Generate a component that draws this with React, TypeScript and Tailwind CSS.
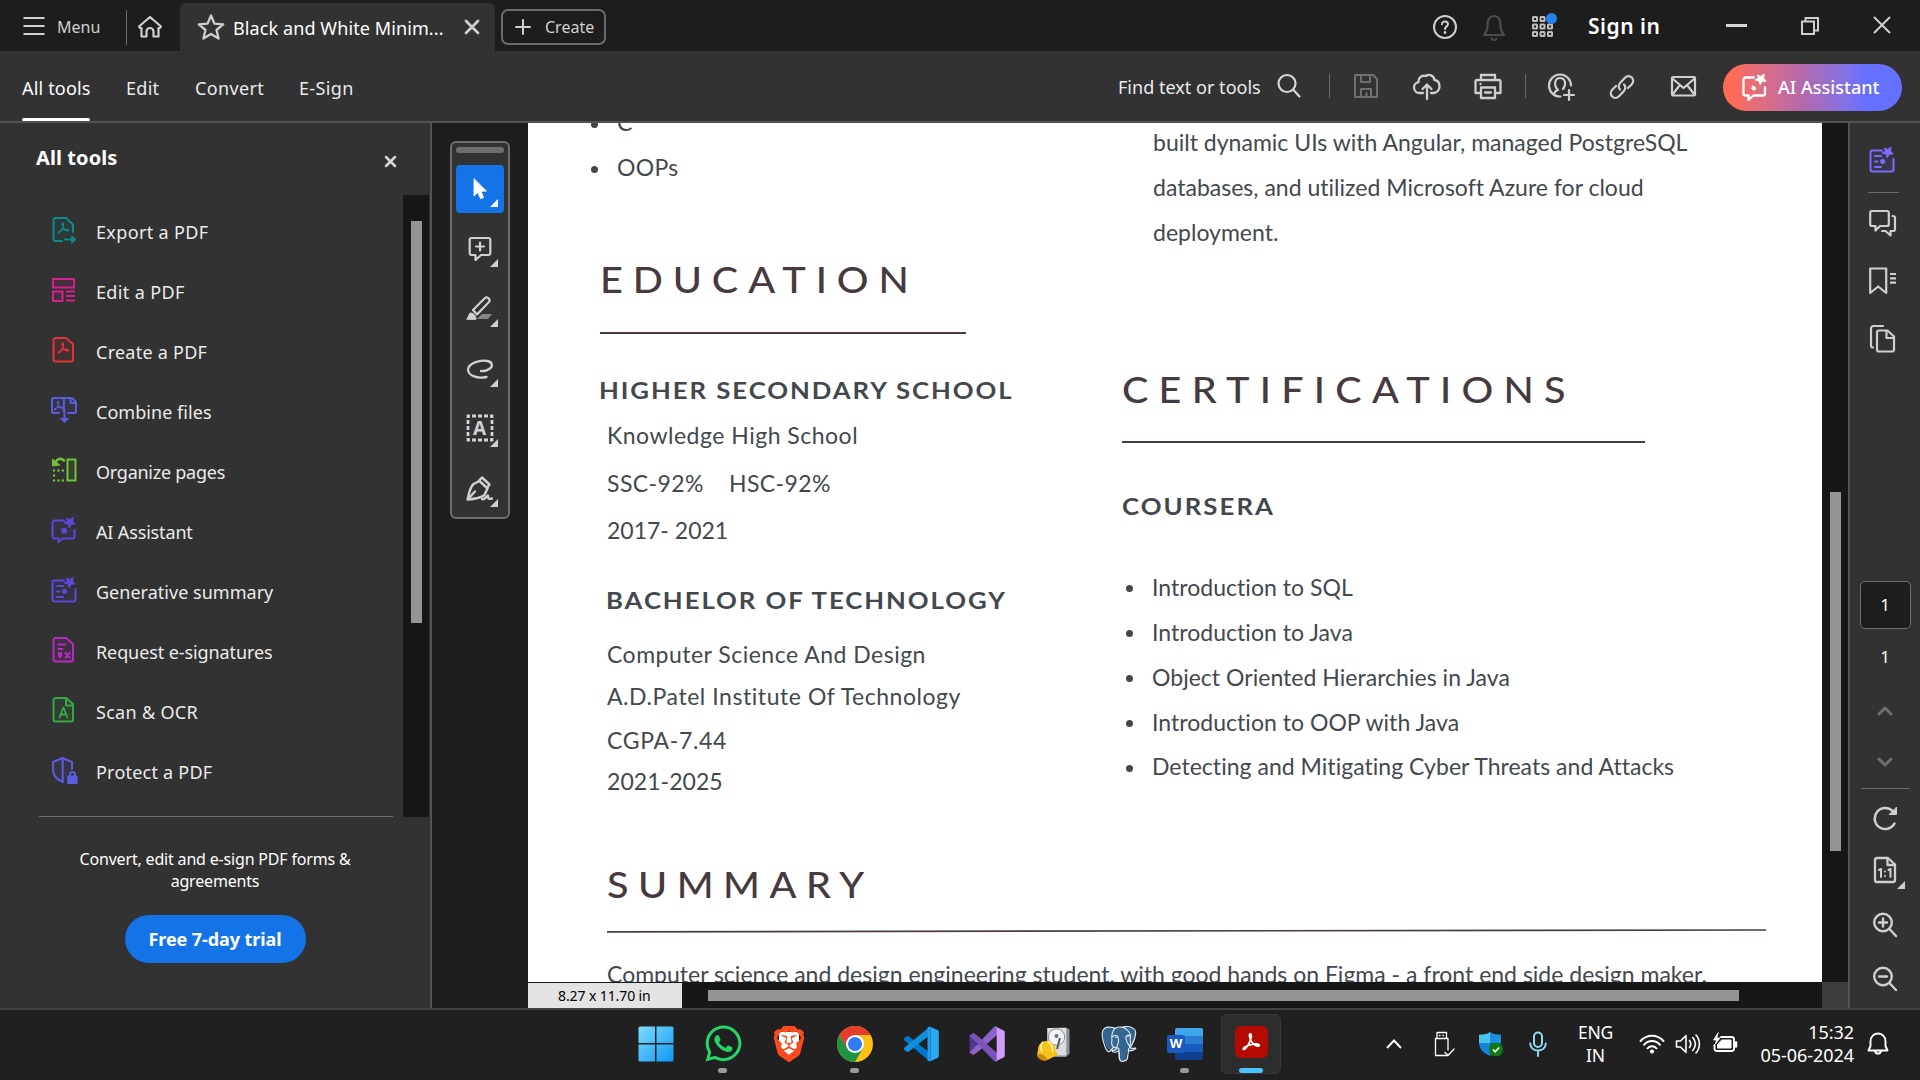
import React from "react";
import { FaWhatsapp } from "react-icons/fa";
import { SiBrave, SiPostgresql } from "react-icons/si";

type SvgProps = {
  w: number;
  h: number;
  vb?: string;
  className?: string;
  sw?: number;
  children: React.ReactNode;
};

function Svg({ w, h, vb, className = "", sw = 2, children }: SvgProps) {
  return (
    <svg
      width={w}
      height={h}
      viewBox={vb ?? `0 0 ${w} ${h}`}
      fill="none"
      stroke="currentColor"
      strokeWidth={sw}
      strokeLinecap="round"
      strokeLinejoin="round"
      className={`block shrink-0 ${className}`}
    >
      {children}
    </svg>
  );
}

const TREFOIL =
  "M11.5 5c-1.5 0-.8 4 .8 6.5 1.6 2.5 4.5 4.3 6 4 1.8-.4.6-2.2-3-1.9-3 .2-6.5 1.4-8.8 2.9-2 1.4-1 2.7.5 1.3 2-1.8 4.8-6.8 5.2-9.8.2-1.8 0-3-.7-3z";

const Sparkle = () => (
  <path
    d="M16.5 2.2l3.3 1.2 3.2-2.2.2 0-.7 3.9 2.6 3-3.9.1-2 3.5-1.2-3.8-3.8-.9 3.2-2.2z"
    fill="currentColor"
    strokeWidth={1}
  />
);

const Triangle = ({ className = "" }: { className?: string }) => (
  <svg width="8" height="8" viewBox="0 0 8 8" className={className}>
    <path d="M8 0v8H0z" fill="currentColor" />
  </svg>
);

/* ---------- sidebar tool icons ---------- */

const PdfPage = ({ arrow = false }: { arrow?: boolean }) => (
  <Svg w={28} h={28}>
    {arrow ? (
      <>
        <path d="M12 25H5.500a2 2 0 0 1-2-2V4a2 2 0 0 1 2-2H16l7 6.500V16" fill="currentColor" fillOpacity={0.1} />
        <path d="M15 23.500h9" />
        <path d="M22 20l4 3.500-4 3.500z" fill="currentColor" strokeWidth={1} />
      </>
    ) : (
      <path d="M5.500 2H16l7 6v15.500a2 2 0 0 1-2 2H5.500a2 2 0 0 1-2-2V4a2 2 0 0 1 2-2z" fill="currentColor" fillOpacity={0.1} />
    )}
    <path d={TREFOIL} transform="translate(4.200 3.200) scale(.75)" strokeWidth={1.7} />
  </Svg>
);

const EditIcon = () => (
  <Svg w={28} h={28}>
    <rect x="3" y="3" width="21" height="8.500" fill="currentColor" fillOpacity={0.1} strokeLinejoin="miter" />
    <rect x="3" y="15.500" width="9.500" height="9.500" fill="currentColor" fillOpacity={0.1} />
    <path d="M16 15.500h9M16 20h9M16 24.500h9" strokeLinecap="butt" />
  </Svg>
);

const CombineIcon = () => (
  <Svg w={28} h={28}>
    <path d="M9 17H3.500A1.500 1.500 0 0 1 2 15.500v-12A1.500 1.500 0 0 1 3.500 2H14v14M18 17h6.500a1.500 1.500 0 0 0 1.500-1.500V6l-4-4h-8" fill="currentColor" fillOpacity={0.1} />
    <path d="M20.500 2v5H26" />
    <path d="M14.500 14v8" />
    <path d="M11 22.500h7.500L14.700 26.500z" fill="currentColor" strokeWidth={1} />
    <path d={TREFOIL} transform="translate(1 2.500) scale(.62)" strokeWidth={1.700} />
  </Svg>
);

const OrganizeIcon = () => (
  <Svg w={28} h={28}>
    <rect x="17.500" y="3.500" width="8" height="21" strokeLinejoin="miter" fill="currentColor" fillOpacity={0.1} />
    <path d="M14 4.500C11 1.500 7 3 5 6.500" strokeWidth={2.500} />
    <path d="M2.500 3.500v6.500l7-1z" fill="currentColor" strokeWidth={1} />
    <path d="M4 14.500h10.500M4 24.500h10.500M4 19.500v.1" strokeWidth={2.400} strokeDasharray="0.100 4.300" />
  </Svg>
);

const AiIcon = () => (
  <Svg w={28} h={28}>
    <path d="M14 4.500H5A2.500 2.500 0 0 0 2.500 7v13A2.500 2.500 0 0 0 5 22.500h3.500V26l4.500-3.500h9a2.500 2.500 0 0 0 2.500-2.500v-6" fill="currentColor" fillOpacity={0.1} />
    <path d="M12 13.500l3.500-.5.700 3-3.200.7z" fill="currentColor" />
    <Sparkle />
  </Svg>
);

const SummaryIcon = () => (
  <Svg w={28} h={28}>
    <path d="M14 4.500H4.500a2 2 0 0 0-2 2V23.500a2 2 0 0 0 2 2h19a2 2 0 0 0 2-2V13" fill="currentColor" fillOpacity={0.1} />
    <path d="M7 10h6M7 15.500h2.500M7 21h6" />
    <path d="M13 14.500l2.500-.8.800 2.500-2.600.8z" fill="currentColor" />
    <Sparkle />
  </Svg>
);

const SignIcon = () => (
  <Svg w={28} h={28}>
    <path d="M5.500 2H16l7 6v15.500a2 2 0 0 1-2 2H5.500a2 2 0 0 1-2-2V4a2 2 0 0 1 2-2z" fill="currentColor" fillOpacity={0.1} />
    <path d="M8.500 8.500h6.500M8.500 13h4" />
    <path d="M8.500 16.500h3v3.500l-1.500 2-1.500-2z" fill="currentColor" strokeWidth={1.200} />
    <path d="M15.500 17l4 4.500M19.500 17l-4 4.500" />
  </Svg>
);

const ScanIcon = () => (
  <Svg w={28} h={28}>
    <path d="M5.500 2H16l7 6v15.500a2 2 0 0 1-2 2H5.500a2 2 0 0 1-2-2V4a2 2 0 0 1 2-2z" fill="currentColor" fillOpacity={0.1} />
    <path d="M16 2v7.500h7" />
    <path d="M9.500 21.500L13 12l.800 0 3.500 9.500M10.700 18.500h5.300" strokeWidth={1.800} />
  </Svg>
);

const ProtectIcon = () => (
  <Svg w={28} h={28}>
    <path d="M13 26C6.500 23.500 3 19.500 3 13.500V6l9.500-4L22 6v7" fill="currentColor" fillOpacity={0.1} />
    <path d="M12.700 2v24" />
    <rect x="18" y="20" width="9" height="7.500" fill="currentColor" strokeWidth={1} />
    <path d="M20 20v-1.500a2.500 2.500 0 0 1 5 0V20" />
  </Svg>
);

const TOOLS = [
  { label: "Export a PDF", icon: <PdfPage arrow />, color: "text-[#0d8c8c]", track: "tracking-[0.36px]" },
  { label: "Edit a PDF", icon: <EditIcon />, color: "text-[#d5218d]", track: "tracking-[0.36px]" },
  { label: "Create a PDF", icon: <PdfPage />, color: "text-[#e2323b]", track: "tracking-[0.25px]" },
  { label: "Combine files", icon: <CombineIcon />, color: "text-[#5c5ce0]", track: "tracking-[0.04px]" },
  { label: "Organize pages", icon: <OrganizeIcon />, color: "text-[#72c13a]", track: "tracking-[-0.25px]" },
  { label: "AI Assistant", icon: <AiIcon />, color: "text-[#5b49dc]", track: "tracking-[-0.15px]" },
  { label: "Generative summary", icon: <SummaryIcon />, color: "text-[#5b49dc]", track: "tracking-[0.02px]" },
  { label: "Request e-signatures", icon: <SignIcon />, color: "text-[#b52bc2]", track: "tracking-[-0.1px]" },
  { label: "Scan & OCR", icon: <ScanIcon />, color: "text-[#36a846]", track: "tracking-[0.3px]" },
  { label: "Protect a PDF", icon: <ProtectIcon />, color: "text-[#5c5ce0]", track: "tracking-[0.22px]" },
];

/* ---------- window header ---------- */

function TitleBar() {
  return (
    <div className="flex h-[51px] items-center bg-[#1d1d1d] text-[#cfcfcf]">
      <Svg w={22} h={20} className="ml-[23px]">
        <path d="M1.200 2h19.600M1.200 10h19.600M1.200 18h19.600" />
      </Svg>
      <span className="ml-3 w-[69px] pt-[2px] text-[16px]">Menu</span>
      <div className="mt-1 h-[35px] w-px bg-[#6a6a6a]" />
      <Svg w={26} h={24} className="ml-[10px] mt-[2px]" sw={2.200}>
        <path d="M2 11.500L13 2l11 9.500-1 1.500h-1.500v8.500h-5V16.500a3.500 3.500 0 0 0-7 0v5h-5V13H3z" />
      </Svg>
      <div className="ml-[17px] flex h-[48px] w-[315px] items-center self-end rounded-t-md bg-[#323232]">
        <Svg w={28} h={28} className="ml-[17px]" sw={2.300}>
          <path d="M14 2.500l3.400 8.100 8.800.7-6.700 5.700 2.100 8.500L14 20.900l-7.600 4.600 2.100-8.500-6.700-5.700 8.800-.7z" />
        </Svg>
        <span className="ml-[8px] w-[229px] pt-[2px] text-[18px] tracking-[0.1px] text-white">Black and White Minim...</span>
        <Svg w={16} h={16} className="ml-[2px]" sw={2.800}>
          <path d="M2 2l12 12M14 2L2 14" />
        </Svg>
      </div>
      <div className="ml-[6px] mt-[3px] flex h-[36px] w-[105px] items-center rounded-[7px] border-2 border-[#6a6a6a]">
        <Svg w={16} h={16} className="ml-[12px]">
          <path d="M8 1v14M1 8h14" />
        </Svg>
        <span className="ml-[14px] text-[16px]">Create</span>
      </div>

      <div className="ml-auto flex h-full items-center">
        <Svg w={26} h={26} className="mt-[2px]" sw={2}>
          <circle cx="13" cy="13" r="11" />
          <path d="M10 10.300c0-4 6-3.700 6-.2 0 2.200-3 2.400-3 4.900" />
          <path d="M13 18.300v.4" strokeWidth={2.600} />
        </Svg>
        <Svg w={24} h={28} className="ml-[24px] mt-[5px] text-[#4b4b4b]" sw={2.200}>
          <path d="M2 21c3-3 3.500-6 3.500-10C5.500 5 8 2 12 2s6.500 3 6.500 9c0 4 .5 7 3.500 10z" />
          <path d="M9.500 24.500c1 2 4 2 5 0" />
        </Svg>
        <div className="relative ml-[25px] mt-[3px]">
          <Svg w={24} h={24} sw={2} className="text-[#bdbdbd]">
            {[2, 9.500, 17].map((y) =>
              [2, 9.500, 17].map((x) => <rect key={`${x}-${y}`} x={x} y={y} width="4" height="4" rx=".5" />),
            )}
          </Svg>
          <span className="absolute -top-[2px] left-[15px] size-[11px] rounded-full bg-[#2680eb]" />
        </div>
        <span className="ml-[33px] w-[101px] pt-[3px] text-[21px] font-semibold tracking-[0.5px] text-white">Sign in</span>
        <div className="ml-[37px] h-[3px] w-[21px] bg-[#d6d6d6]" />
        <Svg w={20} h={20} className="ml-[53px]" sw={2}>
          <path d="M2 5.500h12v12.500H2zM5.500 5V2H18v12.500h-3.500" strokeLinejoin="miter" />
        </Svg>
        <Svg w={18} h={18} className="ml-[53px] mr-[29px] mb-[2px]" sw={2}>
          <path d="M1.500 1.500l15 15M16.500 1.500l-15 15" />
        </Svg>
      </div>
    </div>
  );
}

function Toolbar() {
  return (
    <div className="flex h-[72px] items-center border-b-2 border-[#535353] bg-[#323232] pl-[22px] text-[18px] text-[#ebebeb]">
      <div className="flex h-full w-[68px] flex-col justify-end text-white">
        <span className="mb-[18px] whitespace-nowrap leading-[24px] tracking-[0.18px]">All tools</span>
        <span className="h-[3px] rounded-full bg-white" />
      </div>
      <span className="ml-[36px] w-[69px] pt-[5px] tracking-[0.29px]">Edit</span>
      <span className="w-[104px] pt-[5px] tracking-[0.36px]">Convert</span>
      <span className="pt-[5px] tracking-[0.36px]">E-Sign</span>

      <div className="ml-auto flex h-full items-center text-[#cfcfcf]">
        <span className="w-[158px] pt-[3px] tracking-[0.02px] whitespace-nowrap text-[#ebebeb]">Find text or tools</span>
        <Svg w={26} h={26} className="text-[#d8d8d8]" sw={2.200}>
          <circle cx="11" cy="10.500" r="8.500" />
          <path d="M17.500 17l6 6.500" />
        </Svg>
        <div className="ml-[27px] h-[24px] w-px bg-[#6a6a6a]" />
        <Svg w={26} h={26} className="ml-[23px] text-[#707070]">
          <path d="M2 2h18l4 4v18H2z" />
          <path d="M8 2v7h9V2M8 24v-8h10v8M13.500 20v4" />
        </Svg>
        <Svg w={30} h={28} className="ml-[33px] mt-[2px]" sw={2.300}>
          <path d="M11 20H7.500a5.500 5.500 0 0 1-1-10.900C6 4.500 10 2 14 3c3-2.500 8-.5 8.500 4 3.500.3 5 3 5 6.500S25 20 21.500 20H19" />
          <path d="M15 26V12M10.500 16L15 11.500l4.500 4.500" />
        </Svg>
        <Svg w={30} h={28} className="ml-[31px] mt-[1px]" sw={2.300}>
          <path d="M8 7V2h14v5M7 20H2.500V8.500A1.500 1.500 0 0 1 4 7h22a1.500 1.500 0 0 1 1.500 1.500V20H23" />
          <path d="M8 14.500h14V25H8z M12 19.500h6M7.500 11h.1" />
        </Svg>
        <div className="ml-[22px] h-[24px] w-px bg-[#6a6a6a]" />
        <Svg w={30} h={30} className="ml-[20px] mt-[2px]" sw={2.200}>
          <path d="M14.500 24.500A11 11 0 1 1 25 13.500" />
          <path d="M8 22.500c.5-3 2-4 4-4.500-5-5-3-12 2-12s7 6 3 11" />
          <path d="M23 18v10M18 23h10" />
        </Svg>
        <Svg w={26} h={26} className="ml-[33px] mt-[2px]" sw={2.300}>
          <path d="M11 15.500c-2-2-1.500-5 .5-7l4.500-4.800c2-2 5-2 6.800-.2 1.800 1.800 1.800 4.800 0 6.700L19 14" />
          <path d="M15 10.500c2 2 1.500 5-.5 7L10 22.300c-2 2-5 2-6.800.2-1.800-1.800-1.800-4.800 0-6.700L7 12" />
        </Svg>
        <Svg w={28} h={24} className="ml-[35px] mt-[1px]" sw={2.200}>
          <rect x="2" y="2" width="23" height="18.500" rx="1" />
          <path d="M3 4l10.500 9L24 4M3 19l6.500-8.500M24 19l-6.500-8.500" />
        </Svg>
        <div className="ml-[25px] mr-[18px] mt-[2px] flex h-[47px] w-[179px] items-center rounded-full bg-gradient-to-r from-[#ff6b55] from-5% via-[#b268ad] via-45% to-[#6670ff] to-80% text-white">
          <Svg w={28} h={28} className="ml-[18px]" sw={2.300}>
            <path d="M13 4.500H4.500a2 2 0 0 0-2 2v14a2 2 0 0 0 2 2h3V27l5-4.500h9.500a2 2 0 0 0 2-2v-6" />
            <path d="M12 13l3 2-1.500 2.500L11 16z" fill="currentColor" strokeWidth={1} />
            <Sparkle />
          </Svg>
          <span className="ml-[9px] whitespace-nowrap font-medium tracking-[0.03px]">AI Assistant</span>
        </div>
      </div>
    </div>
  );
}

function Sidebar() {
  return (
    <div className="flex w-[432px] shrink-0 flex-col border-r-2 border-[#535353] bg-[#323232]">
      <div className="flex h-[72px] items-center justify-between pb-[2px] pl-[36px] pr-[33px]">
        <span className="text-[20px] font-bold tracking-[0.09px] text-white">All tools</span>
        <Svg w={13} h={13} className="mt-[6px] text-[#d6d6d6]" sw={2.500}>
          <path d="M2 2l9 9M11 2l-9 9" />
        </Svg>
      </div>
      <div className="flex h-[622px]">
        <div className="mr-[10px] flex w-[393px] flex-col pl-[39px]">
          <div className="h-[623px] border-b border-[#6e6e6e] pt-[6px]">
            {TOOLS.map((t) => (
              <div key={t.label} className="flex h-[60px] items-center pl-[11px]">
                <span className={`mb-[2px] ${t.color}`}>{t.icon}</span>
                <span className={`ml-[18px] pt-[2px] text-[18px] whitespace-nowrap text-[#ebebeb] ${t.track}`}>{t.label}</span>
              </div>
            ))}
          </div>
        </div>
        <div className="w-[26px] bg-[#171717] pt-[26px]">
          <div className="ml-[8px] h-[402px] w-[11px] bg-[#959595]" />
        </div>
      </div>
      <div className="flex flex-col items-center pt-[31px] text-center text-white">
        <p className="text-[16px] leading-[22px] tracking-[-0.18px]">
          Convert, edit and e-sign PDF forms &
          <br />
          agreements
        </p>
        <button className="mt-[23px] h-[48px] w-[181px] rounded-full bg-[#1473e6] text-[18px] font-bold tracking-[-0.09px]">
          Free 7-day trial
        </button>
      </div>
    </div>
  );
}

const QUICK_TOOLS = [
  <Svg key="arrow" w={26} h={28} className="-mt-[2px] text-white">
    <path d="M7 5v17l3.800-3.500 2.800 6.300 3-1.300L14 17.300l5.200-.2z" fill="currentColor" strokeWidth={.8} />
  </Svg>,
  <Svg key="note" w={26} h={28} sw={2.200}>
    <path d="M4.500 3h17A1.800 1.800 0 0 1 23.300 4.800v13.400a1.800 1.800 0 0 1-1.800 1.800H14l-5.500 5V20h-4a1.800 1.800 0 0 1-1.800-1.800V4.800A1.800 1.800 0 0 1 4.500 3zM13 7.500v8M9 11.500h8" />
  </Svg>,
  <Svg key="highlight" w={28} h={28} sw={2.200} className="-mt-[3px] -ml-[2px]">
    <path d="M12 25l5-5h10l-4 5z" fill="#858585" stroke="none" />
    <path d="M8 16L20 4c2-2 6 1.500 4 4L12 20.500z" />
    <path d="M2 25l3-6c3 0 6 2 6 6z" fill="currentColor" strokeWidth={1} />
  </Svg>,
  <Svg key="lasso" w={28} h={28} sw={2.300}>
    <path d="M20.500 22C10 24 2.500 20 2 15 2 8 14 4.500 21.500 6c5 1 5.500 5 2.500 7.500-2.500 2-6 2.700-9 2.500" />
  </Svg>,
  <div key="text" className="-mt-[2px] -ml-px flex size-[28px] items-center justify-center">
    <svg width="28" height="28" viewBox="0 0 28 28" className="absolute" fill="none" stroke="currentColor" strokeWidth="2.800">
      <rect x="2" y="2" width="24" height="24" strokeDasharray="4 2" strokeDashoffset="2" />
    </svg>
    <span className="text-[19px] leading-none font-bold">A</span>
  </div>,
  <Svg key="pen" w={28} h={28} sw={2.400} className="-mt-px -ml-[2px]">
    <path d="M2.500 24.500C4 18 5 12 8.500 9l6-3 8 7.500-3 6.500c-3.500 3-10 4-17 4.500zl7.500-8" />
    <path d="M14 5.500l3-3 7.500 7-2.500 3.500M17 24c3 1.500 5-4 6-3.500s-2 4.500 4 3" />
  </Svg>,
];

function QuickTools() {
  return (
    <div className="w-[96px] shrink-0 bg-[#1d1d1d] pt-[18px] pl-[18px]">
      <div className="flex h-[378px] w-[60px] flex-col items-center rounded-md border-2 border-[#6e6e6e] bg-[#323232] pt-[4px]">
        <div className="mb-[12px] h-[6px] w-[48px] shrink-0 rounded-full bg-[#6e6e6e]" />
        <div className="flex flex-col gap-[12px]">
          {QUICK_TOOLS.map((icon, i) => (
            <div
              key={i}
              className={`relative flex size-[48px] items-center justify-center rounded-[4px] text-[#d0d0d0] ${i === 0 ? "bg-[#1473e6]" : ""}`}
            >
              {icon}
              <Triangle className={`absolute right-[6px] bottom-[6px] ${i === 0 ? "text-white" : ""}`} />
            </div>
          ))}
        </div>
      </div>
    </div>
  );
}

/* ---------- document ---------- */

const CERTS = [
  "Introduction to SQL",
  "Introduction to Java",
  "Object Oriented Hierarchies in Java",
  "Introduction to OOP with Java",
  "Detecting and Mitigating Cyber Threats and Attacks",
];

const Heading = ({ className, children }: { className: string; children: string }) => (
  <h2
    className={`h-[44px] origin-left scale-x-110 text-[36px] leading-[44px] font-medium whitespace-nowrap text-[#463a40] ${className}`}
  >
    {children}
  </h2>
);

const Sub = ({ className, children }: { className: string; children: string }) => (
  <h3
    className={`h-[30px] origin-left scale-x-[1.12] text-[23px] leading-[30px] font-bold whitespace-nowrap text-[#43484e] ${className}`}
  >
    {children}
  </h3>
);

const Line = ({ className, children }: { className: string; children: React.ReactNode }) => (
  <p className={`h-[30px] pl-[7px] leading-[30px] whitespace-nowrap ${className}`}>{children}</p>
);

function ResumePage() {
  return (
    <div className="h-[859px] overflow-hidden bg-white font-['Lato',sans-serif] text-[23px] text-[#43484e]">
      <div className="grid h-[739px] grid-cols-[594px_1fr]">
        <div className="pl-[72px]">
          <ul className="-mt-[23px] -ml-[9px]">
            {["C", "OOPs"].map((s) => (
              <li key={s} className="flex h-[45px] items-center gap-[19px] tracking-[0.300px]">
                <span className="mt-[3px] size-[7px] rounded-full bg-[#43484e]" />
                {s}
              </li>
            ))}
          </ul>
          <Heading className="mt-[67px] tracking-[9px]">EDUCATION</Heading>
          <div className="mt-[31px] h-[2px] w-[366px] bg-[#4a3c42]" />
          <Sub className="mt-[41px] -ml-px tracking-[1.730px]">HIGHER SECONDARY SCHOOL</Sub>
          <Line className="mt-[15px] tracking-[0.500px]">Knowledge High School</Line>
          <Line className="mt-[18px] flex tracking-[0.400px]">
            <span className="w-[122px]">SSC-92%</span>
            <span>HSC-92%</span>
          </Line>
          <Line className="mt-[17px] tracking-[0px]">2017- 2021</Line>
          <Sub className="mt-[40px] ml-[6px] tracking-[1.730px]">BACHELOR OF TECHNOLOGY</Sub>
          <Line className="mt-[24px] tracking-[0.490px]">Computer Science And Design</Line>
          <Line className="mt-[12px] tracking-[0.550px]">A.D.Patel Institute Of Technology</Line>
          <Line className="mt-[14px] tracking-[0.660px]">CGPA-7.44</Line>
          <Line className="mt-[11px] tracking-[0.050px]">2021-2025</Line>
        </div>
        <div>
          <p className="-mt-[3px] pl-[31px] leading-[45px] tracking-[0.010px] whitespace-nowrap">
            built dynamic UIs with Angular, managed PostgreSQL
            <br />
            databases, and utilized Microsoft Azure for cloud
            <br />
            deployment.
          </p>
          <Heading className="mt-[112px] tracking-[9.300px]">CERTIFICATIONS</Heading>
          <div className="mt-[30px] h-[2px] w-[523px] bg-[#4a3c42]" />
          <Sub className="mt-[48px] tracking-[1.830px]">COURSERA</Sub>
          <ul className="mt-[44px] ml-[4px]">
            {CERTS.map((s) => (
              <li key={s} className="flex h-[44.800px] items-center gap-[19px] tracking-[0.030px] whitespace-nowrap">
                <span className="mt-[3px] size-[7px] rounded-full bg-[#43484e]" />
                {s}
              </li>
            ))}
          </ul>
        </div>
      </div>
      <div className="pl-[79px]">
        <Heading className="tracking-[8.600px]">SUMMARY</Heading>
        <svg width="1159" height="6" viewBox="0 0 1159 6" className="mt-[22px] block">
          <path d="M0 3.800L1159 2" stroke="#4a3c42" strokeWidth="1.700" />
        </svg>
        <p className="mt-[25px] leading-[30px] tracking-[0px] whitespace-nowrap">
          Computer science and design engineering student, with good hands on Figma - a front end side design maker.
        </p>
      </div>
    </div>
  );
}

function DocumentPane() {
  return (
    <div className="flex min-w-0 flex-1 bg-[#171717]">
      <div className="flex w-[1294px] flex-col">
        <ResumePage />
        <div className="flex h-[26px] items-center">
          <div className="mt-px h-[25px] w-[154px] bg-[#e3e3e3] pl-[30px] text-[14px] leading-[25px] tracking-[-0.100px] text-black">
            8.27 x 11.70 in
          </div>
          <div className="ml-[26px] h-[11px] w-[1031px] bg-[#959595]" />
        </div>
      </div>
      <div className="flex w-[26px] flex-col justify-between">
        <div className="mt-[369px] ml-[8px] h-[359px] w-[11px] bg-[#959595]" />
        <div className="h-[26px] bg-[#3c3c3c]" />
      </div>
    </div>
  );
}

function RightRail() {
  return (
    <div className="flex w-[72px] shrink-0 flex-col items-center border-l-2 border-[#535353] bg-[#323232] text-[#cfcfcf]">
      <div className="flex w-full flex-col pl-[18px]">
        <span className="mt-[23px] text-[#7b6cff]">
          <SummaryIcon />
        </span>
        <div className="mt-[18px] h-px w-[31px] bg-[#6a6a6a]" />
        <Svg w={30} h={30} className="mt-[15px]" sw={2.200}>
          <path d="M4 3h15a1.800 1.800 0 0 1 1.800 1.800v11.400a1.800 1.800 0 0 1-1.800 1.800h-7l-4.500 4.500V18H4a1.800 1.800 0 0 1-1.800-1.800V4.800A1.800 1.800 0 0 1 4 3z" />
          <path d="M24.500 8c1.500 0 2.500.8 2.500 2v11a2 2 0 0 1-2 2h-2.500v4.500L17.500 23H14" />
        </Svg>
        <Svg w={30} h={30} className="mt-[28px]" sw={2.200}>
          <path d="M2.200 2.500h16V27l-8-6.500-8 6.500z" />
          <path d="M22 8h6M22 12.300h6M22 16.600h6" strokeLinecap="butt" />
        </Svg>
        <Svg w={30} h={30} className="mt-[28px]" sw={2.200}>
          <path d="M5 23.500c-1.500 0-2-1-2-2V4.500A2.500 2.500 0 0 1 5.500 2H15" />
          <path d="M11 6.500h8.500l6.500 6v13a2 2 0 0 1-2 2H11a2 2 0 0 1-2-2v-17a2 2 0 0 1 2-2z" />
          <path d="M18.500 7v7H26" />
        </Svg>
      </div>
      <div className="mt-[227px] flex h-[48px] w-[51px] items-center justify-center rounded-[5px] border border-[#6e6e6e] bg-[#1d1d1d] text-[17px] text-white">
        1
      </div>
      <span className="mt-[16px] text-[17px] leading-[24px] text-white">1</span>
      <Svg w={16} h={10} className="mt-[37px] text-[#6e6e6e]" sw={3}>
        <path d="M2 8l6-6 6 6" />
      </Svg>
      <Svg w={16} h={10} className="mt-[41px] text-[#6e6e6e]" sw={3}>
        <path d="M2 2l6 6 6-6" />
      </Svg>
      <div className="mt-[21px] h-px w-[49px] bg-[#6a6a6a]" />
      <Svg w={26} h={26} className="mt-[16px]" sw={2.500}>
        <path d="M22.500 18.500A10.500 10.500 0 1 1 21 6.500" />
        <path d="M17.500 9.500h7V2.500z" fill="currentColor" strokeWidth={1} />
      </Svg>
      <div className="relative mt-[25px]">
        <Svg w={24} h={28} sw={2.300}>
          <path d="M4 2h11l7 6.500v15.500a2 2 0 0 1-2 2H4a2 2 0 0 1-2-2V4a2 2 0 0 1 2-2z" />
          <path d="M14.500 2.500v6.500H22" />
          <path d="M6 14l2-1v8M15.500 14l2-1v8M12 15.500v.1M12 20v.1" strokeWidth={2} />
        </Svg>
        <Triangle className="absolute top-[25px] left-[24px]" />
      </div>
      <Svg w={26} h={26} className="mt-[28px]" sw={2.400}>
        <circle cx="11" cy="10.500" r="8.800" />
        <path d="M17.500 17l6.500 7M11 6.500v8M7 10.500h8" />
      </Svg>
      <Svg w={26} h={26} className="mt-[28px]" sw={2.400}>
        <circle cx="11" cy="10.500" r="8.800" />
        <path d="M17.500 17l6.500 7M7 10.500h8" />
      </Svg>
    </div>
  );
}

/* ---------- taskbar ---------- */

const WindowsLogo = () => (
  <svg width="36" height="36" viewBox="0 0 36 36" className="-ml-[3px]">
    <defs>
      <linearGradient id="win" x1="0" y1="0" x2="1" y2="1" gradientUnits="objectBoundingBox">
        <stop offset="0" stopColor="#7fdcfb" />
        <stop offset="1" stopColor="#0d97f5" />
      </linearGradient>
    </defs>
    <path d="M2 .5h15v16.500H.5V2A1.500 1.500 0 0 1 2 .5zM18.500 .5H34A1.500 1.500 0 0 1 35.500 2v15h-17zM.5 18.500H17v17H2A1.500 1.500 0 0 1 .5 34zM18.500 18.500h17V34a1.500 1.500 0 0 1-1.500 1.500H18.500z" fill="url(#win)" />
  </svg>
);

const ChromeLogo = () => (
  <svg width="36" height="36" viewBox="0 0 36 36">
    <circle cx="18" cy="18" r="18" fill="#fbc116" />
    <path d="M2.400 9A18 18 0 0 1 33.600 9H18L10.200 22.500z" fill="#e33b2e" />
    <path d="M2.400 9A18 18 0 0 0 18 36l7.800-13.500H10.200z" fill="#229342" />
    <circle cx="18" cy="18" r="9" fill="#fff" />
    <circle cx="18" cy="18" r="7" fill="#2f7cf0" />
  </svg>
);

const VsCodeLogo = () => (
  <svg width="36" height="36" viewBox="0 0 36 36">
    <path d="M1 12.500l2.600-2.300 2 .1L27 27v8.500L.9 14z" fill="#0079cc" />
    <path d="M1 23.500l2.600 2.300 2-.1L27 9V.5L.9 22z" fill="#0f8fdc" />
    <path d="M26 .3L35 4.300a1.500 1.500 0 0 1 .8 1.400v24.600a1.500 1.500 0 0 1-.8 1.400l-9 4c1.400-.6 1.500-1.700 1.500-2.700V3C27.500 1.800 27.200.8 26 .3z" fill="#29a9f2" />
    <path d="M24.500 1.200L27.500.8v34.400l-3-.5z" fill="#1f9cf0" />
  </svg>
);

const VisualStudioLogo = () => (
  <svg width="36" height="36" viewBox="0 0 36 36">
    <path d="M.5 9.500l4-2.500 3 2.300v17.400l-3 2.300-4-2.500z" fill="#52378f" />
    <path d="M.5 26.500l4 2.500L10.500 24.500 28 9V.5L25.500.5z" fill="#8f62c9" />
    <path d="M.5 9.500l4-2.500L10 11l18 16v8.500l-2.500 0z" fill="#7a52b8" />
    <path d="M26 .3l9 4.500c.5.3.8.8.8 1.400v23.600c0 .6-.3 1.100-.8 1.400l-9 4.500c1.500-.8 1.700-1.700 1.700-2.700V3c0-1-.4-2-1.700-2.700z" fill="#d09bfb" />
  </svg>
);

const DriveLogo = () => (
  <svg width="36" height="36" viewBox="0 0 36 36">
    <path d="M12 2l19-.5 3.500 2v24L31 31H12z" fill="#8c8f94" />
    <path d="M12.500 2h18.800v27.500H12.500z" fill="#d9dde2" />
    <circle cx="21.500" cy="11" r="8.200" fill="#f2f4f7" stroke="#8b9098" strokeWidth="1" />
    <circle cx="21.500" cy="10" r="2" fill="#6e737b" />
    <path d="M25 12l-3 11" stroke="#555b63" strokeWidth="2" />
    <path d="M3 24c0-6 4-9.500 9-9s8.500 4.500 8.500 10l2.500 3.500L12.500 34 2 29z" fill="#f6c21c" />
    <path d="M2 29c4-3 8 1 11 4.800L10 35c-4-.5-8-3-8-6z" fill="#c98a06" />
    <path d="M8 16c-2.500 3-2.500 7-1 10M13 15.500c3.500 2.500 5 6 4.500 10.500" stroke="#fff0a0" strokeWidth="1.600" fill="none" />
  </svg>
);

const WordLogo = () => (
  <div className="relative h-[32px] w-[36px]">
    <div className="ml-[8px] flex h-[32px] w-[28px] flex-col overflow-hidden rounded-[2px]">
      <span className="h-[8px] bg-[#41a5ee]" />
      <span className="h-[8px] bg-[#2b7cd3]" />
      <span className="h-[8px] bg-[#185abd]" />
      <span className="h-[8px] bg-[#103f91]" />
    </div>
    <div className="absolute top-[7px] left-0 flex size-[18px] items-center justify-center rounded-[2px] bg-[#185abd] text-[13px] leading-none font-bold text-white">
      W
    </div>
  </div>
);

const PostgresLogo = () => (
  <div className="relative size-[36px]">
    <svg width="36" height="36" viewBox="0 0 36 36" className="absolute">
      <path d="M3 3c4-3 9-2 13-1 5-2 16-3 18 4 1 6-2 12-4 16 2 0 4 0 4 1-2 3-6 3-8 3l-1 7c-2 4-7 3-7-1l-1-8c-3 2-8 2-10-1C3 18-1 7 3 3z" fill="#336791" />
    </svg>
    <SiPostgresql className="absolute size-[36px] text-[#e8eef3]" />
  </div>
);

const AcrobatLogo = () => (
  <div className="flex h-[32px] w-[33px] items-center justify-center rounded-[6px] bg-[#b30b00] text-white">
    <Svg w={28} h={28} vb="0 0 24 24" sw={1.500}>
      <path d={TREFOIL} />
    </Svg>
  </div>
);

const BraveLogo = () => (
  <div className="relative size-[36px]">
    <div className="absolute top-[6px] left-[8px] h-[23px] w-[20px] rounded-b-full bg-white" />
    <SiBrave className="absolute size-[36px] text-[#fb4a1f]" />
  </div>
);

const APPS: { logo: React.ReactNode; mark?: "dot" | "bar" }[] = [
  { logo: <WindowsLogo /> },
  { logo: <FaWhatsapp className="size-[41px] text-[#25d366]" />, mark: "dot" },
  { logo: <BraveLogo /> },
  { logo: <ChromeLogo />, mark: "dot" },
  { logo: <VsCodeLogo /> },
  { logo: <VisualStudioLogo /> },
  { logo: <DriveLogo /> },
  { logo: <PostgresLogo /> },
  { logo: <WordLogo />, mark: "dot" },
  { logo: <AcrobatLogo />, mark: "bar" },
];

function Taskbar() {
  return (
    <div className="flex h-[72px] border-t-2 border-[#434343] bg-[#202020] text-white">
      <div className="ml-[624px] flex pt-[4px]">
        {APPS.map((a, i) => (
          <div
            key={i}
            className={`relative mx-[3px] flex h-[60px] w-[60px] items-center justify-center rounded-md pb-px ${
              a.mark === "bar" ? "border border-[#383838] bg-[#2d2d2d]" : ""
            }`}
          >
            <div className={a.mark === "bar" ? "mb-[3px]" : ""}>{a.logo}</div>
            {a.mark === "dot" && <span className="absolute bottom-px left-[25px] h-[5px] w-[9px] rounded-full bg-[#9a9a9a]" />}
            {a.mark === "bar" && <span className="absolute bottom-0 left-[17px] h-[5px] w-[24px] rounded-full bg-[#4cc2ff]" />}
          </div>
        ))}
      </div>
      <div className="ml-auto flex items-center pb-[2px]">
        <Svg w={18} h={12}>
          <path d="M2 10l7-7.500L16 10" strokeLinecap="butt" strokeLinejoin="miter" />
        </Svg>
        <Svg w={22} h={26} className="ml-[31px]" sw={1.300}>
          <path d="M13.500 24.500H1.500V7.500h12.500V19M3 7V1.500h9.500V7M5.500 4.500h.5M9 4.500h.5M11 21.500l3 3 6-6.500" />
        </Svg>
        <svg width="24" height="26" viewBox="0 0 24 26" className="ml-[23px]">
          <path d="M11 1c3 2.500 7 2.500 11 2.800V12H11z" fill="#1d8fe0" />
          <path d="M11 1C8 3.500 4 3.500 0 3.800V12h11z" fill="#47c3f0" />
          <path d="M0 12h11v13C4 22 .5 18 0 12z" fill="#1683d8" />
          <path d="M11 12h11c-.5 6-4 10-11 13z" fill="#0b5bb0" />
          <circle cx="17" cy="18.500" r="7" fill="#0e7a12" />
          <path d="M14 18.500l2.200 2.300 4-4.300" stroke="#fff" strokeWidth="1.600" fill="none" />
        </svg>
        <Svg w={18} h={26} className="ml-[26px] text-[#8bdcf2]" sw={2}>
          <rect x="5" y="1.500" width="8" height="14.500" rx="4" />
          <path d="M1.200 12.500c.3 4 3.300 7 7.800 7s7.500-3 7.800-7M9 20v5" />
        </Svg>
        <div className="ml-[30px] w-[37px] text-center text-[17.500px] leading-[23px] tracking-[-0.200px]">
          ENG
          <br />
          IN
        </div>
        <Svg w={26} h={22} className="ml-[25px]" sw={1.900}>
          <path d="M1.500 8C8 1 18 1 24.500 8M5 11.800c4.500-5 11.500-5 16 0M8.500 15.300c2.500-2.800 6.500-2.800 9 0" />
          <circle cx="13" cy="18.500" r="1.700" fill="currentColor" strokeWidth={.8} />
        </Svg>
        <Svg w={26} h={22} className="ml-[10px]" sw={1.600}>
          <path d="M1.500 8h4L11 2.500v17L5.500 14h-4z" />
          <path d="M14.500 7.500c1.500 2 1.500 5 0 7M17.800 4.500c3.200 4 3.200 9 0 13M21 2c4.500 5 4.500 13 0 18" />
        </Svg>
        <Svg w={26} h={22} className="ml-[11px] mb-[2px]" sw={1.900}>
          <path d="M9 5h10.500A2.500 2.500 0 0 1 22 7.500v9a2.500 2.500 0 0 1-2.500 2.500H5a2.500 2.500 0 0 1-2.500-2.500V13" />
          <path d="M10 8h9v8H5.500v-3z" fill="currentColor" strokeWidth={1} />
          <path d="M24 10.500v4" strokeWidth={2.500} />
          <path d="M6 1L1.500 8h3L3.500 12 8 6H5z" fill="currentColor" strokeWidth={.8} />
        </Svg>
        <div className="ml-[16px] w-[100px] text-right text-[18px] leading-[23px] tracking-[-0.050px] whitespace-nowrap">
          15:32
          <br />
          05-06-2024
        </div>
        <Svg w={22} h={24} className="ml-[13px] mr-[31px]" sw={1.900}>
          <path d="M1.500 18.500l2-4.500V9.500C3.500 4.500 7 1.500 11 1.500s7.500 3 7.500 8V14l2 4.500z" />
          <path d="M8 19c.5 3.500 5.500 3.500 6 0" />
        </Svg>
      </div>
    </div>
  );
}

export default function App() {
  return (
    <div className="flex h-[1080px] w-[1920px] flex-col overflow-hidden bg-[#1d1d1d] font-['Noto_Sans',sans-serif]">
      <TitleBar />
      <Toolbar />
      <div className="flex h-[885px]">
        <Sidebar />
        <QuickTools />
        <DocumentPane />
        <RightRail />
      </div>
      <Taskbar />
    </div>
  );
}
